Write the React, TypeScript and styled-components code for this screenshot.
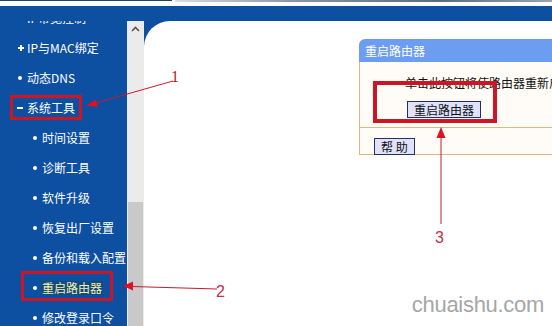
import React from "react";
import styled, { createGlobalStyle, css } from "styled-components";

const Global = createGlobalStyle`
  html, body { margin: 0; padding: 0; background: #ffffff; overflow: hidden; }
  body { font-family: "Noto Sans CJK SC", "DejaVu Sans", sans-serif; }
`;

const Page = styled.div`
  position: relative;
  width: 552px;
  height: 326px;
  overflow: hidden;
  display: flex;
  flex-direction: column;
  background: #ffffff;
`;

const TopStrip = styled.div`
  height: 6px;
  display: flex;
  flex: none;
`;

const TopLeft = styled.div`
  width: 172px;
  border-top: 1px solid #1d4659;
`;

const TopRight = styled.div`
  flex: 1;
  margin-left: 3px;
  height: 2px;
  background: linear-gradient(90deg, #d8dde6 0%, #8c97a8 30%, #5c6a80 70%, #9aa4b4 100%);
`;

const Frame = styled.div`
  flex: 1;
  display: flex;
  flex-direction: column;
  background: #0d4fa1;
  min-height: 0;
`;

const HeaderBand = styled.div`
  height: 15px;
  flex: none;
`;

const Main = styled.div`
  flex: 1;
  display: flex;
  min-height: 0;
`;

const Sidebar = styled.nav`
  width: 127px;
  flex: none;
  overflow: hidden;
`;

const MenuList = styled.ul`
  list-style: none;
  margin: -18px 0 0 0;
  padding: 0;
`;

const Item = styled.li<{ $level: number }>`
  height: 30px;
  display: flex;
  align-items: center;
  padding-left: ${(p) => (p.$level === 1 ? 17 : 32)}px;
  color: #ffffff;
  font-size: 12px;
  line-height: 14px;
  white-space: nowrap;
`;

const Bullet = styled.span<{ $kind: "plus" | "dot" | "dash" }>`
  position: relative;
  width: 10px;
  height: 8px;
  flex: none;
  &::before,
  &::after {
    content: "";
    position: absolute;
    background: #ffffff;
  }
  ${(p) =>
    p.$kind === "dot" &&
    css`
      &::before { left: 1px; top: 2px; width: 4px; height: 4px; border-radius: 50%; }
      &::after { display: none; }
    `}
  ${(p) =>
    p.$kind === "plus" &&
    css`
      &::before { left: 1px; top: 3px; width: 6px; height: 2px; }
      &::after { left: 3px; top: 1px; width: 2px; height: 6px; }
    `}
  ${(p) =>
    p.$kind === "dash" &&
    css`
      &::before { left: 0px; top: 3px; width: 6px; height: 2px; }
      &::after { display: none; }
    `}
`;

const Label = styled.span<{ $active?: boolean }>`
  ${(p) =>
    p.$active &&
    css`
      color: #f4f0a2;
      background: rgba(40, 60, 40, 0.25);
      padding: 0 1px;
      margin-left: -1px;
    `}
`;

const Scrollbar = styled.div`
  width: 17px;
  flex: none;
  background: #ebebeb;
  display: flex;
  flex-direction: column;
  align-items: center;
`;

const ScrollUp = styled.div`
  height: 16px;
  width: 100%;
  display: flex;
  align-items: center;
  justify-content: center;
`;

const ScrollGap = styled.div`
  height: 165px;
  flex: none;
`;

const ScrollThumb = styled.div`
  flex: 1;
  width: 15px;
  background: #c9c9c9;
`;

const Content = styled.main`
  flex: 1;
  background: #ffffff;
  border-top-left-radius: 26px;
  overflow: hidden;
  padding: 18px 0 0 215px;
`;

const Panel = styled.section`
  width: 280px;
`;

const PanelHeader = styled.div`
  height: 23px;
  background: #6c9df1;
  border-top-left-radius: 6px;
  color: #ffffff;
  font-size: 12px;
  line-height: 23px;
  padding-left: 6px;
`;

const PanelBody = styled.div`
  height: 51px;
  padding: 14px 0 0 45px;
  background: #fffcf7;
  border-left: 1px solid #e4b57c;
  border-bottom: 1px solid #e4b57c;
  display: flex;
  flex-direction: column;
  align-items: flex-start;
`;

const BodyText = styled.div`
  font-size: 12px;
  line-height: 13px;
  color: #111111;
  white-space: nowrap;
`;

const Button = styled.button<{ $offset?: number }>`
  height: 17px;
  padding: 0 6px;
  margin: ${(p) => (p.$offset ? `${p.$offset}px 0 0 2px` : "0")};
  background: #dfe2fa;
  border: 1px solid #24305f;
  border-radius: 0;
  color: #111111;
  font-family: "Noto Sans CJK SC", sans-serif;
  font-size: 12px;
  line-height: 15px;
  white-space: nowrap;
`;

const PanelFooter = styled.div`
  height: 21px;
  padding: 5px 0 0 14px;
  background: #fffcf7;
  border-left: 1px solid #e4b57c;
  border-bottom: 1px solid #e4b57c;
`;

const Overlay = styled.svg`
  position: absolute;
  left: 0;
  top: 0;
  pointer-events: none;
`;

const Watermark = styled.div`
  position: absolute;
  right: 8px;
  bottom: 8px;
  font-family: "Liberation Sans", "DejaVu Sans", sans-serif;
  font-size: 22px;
  letter-spacing: -0.3px;
  color: #a6a6a6;
  text-shadow: 0 0 1px #ffffff, 0 0 2px #ffffff;
`;

type MenuEntry = { label: string; level: number; bullet: "plus" | "dot" | "dash"; active?: boolean };

const menu: MenuEntry[] = [
  { label: "IP带宽控制", level: 1, bullet: "dash" },
  { label: "IP与MAC绑定", level: 1, bullet: "plus" },
  { label: "动态DNS", level: 1, bullet: "dot" },
  { label: "系统工具", level: 1, bullet: "dash" },
  { label: "时间设置", level: 2, bullet: "dot" },
  { label: "诊断工具", level: 2, bullet: "dot" },
  { label: "软件升级", level: 2, bullet: "dot" },
  { label: "恢复出厂设置", level: 2, bullet: "dot" },
  { label: "备份和载入配置", level: 2, bullet: "dot" },
  { label: "重启路由器", level: 2, bullet: "dot", active: true },
  { label: "修改登录口令", level: 2, bullet: "dot" },
];

const RED = "#cc1626";
const LINE = "#c41c30";

export default function App() {
  return (
    <>
      <Global />
      <Page>
        <TopStrip>
          <TopLeft />
          <TopRight />
        </TopStrip>
        <Frame>
          <HeaderBand />
          <Main>
            <Sidebar>
              <MenuList>
                {menu.map((m) => (
                  <Item key={m.label} $level={m.level}>
                    <Bullet $kind={m.bullet} />
                    <Label $active={m.active}>{m.label}</Label>
                  </Item>
                ))}
              </MenuList>
            </Sidebar>
            <Scrollbar>
              <ScrollUp>
                <svg width="9" height="6" viewBox="0 0 9 6">
                  <path d="M1 5 L4.5 1.5 L8 5" fill="none" stroke="#555" strokeWidth="1.6" />
                </svg>
              </ScrollUp>
              <ScrollGap />
              <ScrollThumb />
            </Scrollbar>
            <Content>
              <Panel>
                <PanelHeader>重启路由器</PanelHeader>
                <PanelBody>
                  <BodyText>单击此按钮将使路由器重新启动。</BodyText>
                  <Button $offset={12}>重启路由器</Button>
                </PanelBody>
                <PanelFooter>
                  <Button>帮 助</Button>
                </PanelFooter>
              </Panel>
            </Content>
          </Main>
        </Frame>

        <Overlay width="552" height="326" viewBox="0 0 552 326">
          <rect x="11.5" y="96.5" width="69" height="22" fill="none" stroke={RED} strokeWidth="3" />
          <rect x="22.5" y="272.5" width="89" height="27" fill="none" stroke={RED} strokeWidth="3" />
          <rect x="375" y="83" width="120" height="38" fill="none" stroke={RED} strokeWidth="4" />

          <line x1="173" y1="81" x2="94" y2="103.5" stroke={LINE} strokeWidth="1" />
          <polygon points="86,105.5 96,99.5 98,107" fill="#e01020" />
          <text x="171" y="82" fill="#b01a2a" fontFamily="Liberation Serif, serif" fontSize="16">1</text>

          <line x1="132" y1="286.5" x2="217" y2="289" stroke={LINE} strokeWidth="1" />
          <polygon points="123,286 133,281.5 133,290.5" fill="#e01020" />
          <text x="216" y="297" fill="#c0304a" fontFamily="Liberation Sans, sans-serif" fontSize="16">2</text>

          <line x1="441" y1="137" x2="441" y2="224" stroke={LINE} strokeWidth="1" />
          <polygon points="441,127 436.5,138 445.5,138" fill="#e01020" />
          <text x="435" y="243" fill="#c0304a" fontFamily="Liberation Sans, sans-serif" fontSize="16">3</text>
        </Overlay>
        <Watermark>chuaishu.com</Watermark>
      </Page>
    </>
  );
}
